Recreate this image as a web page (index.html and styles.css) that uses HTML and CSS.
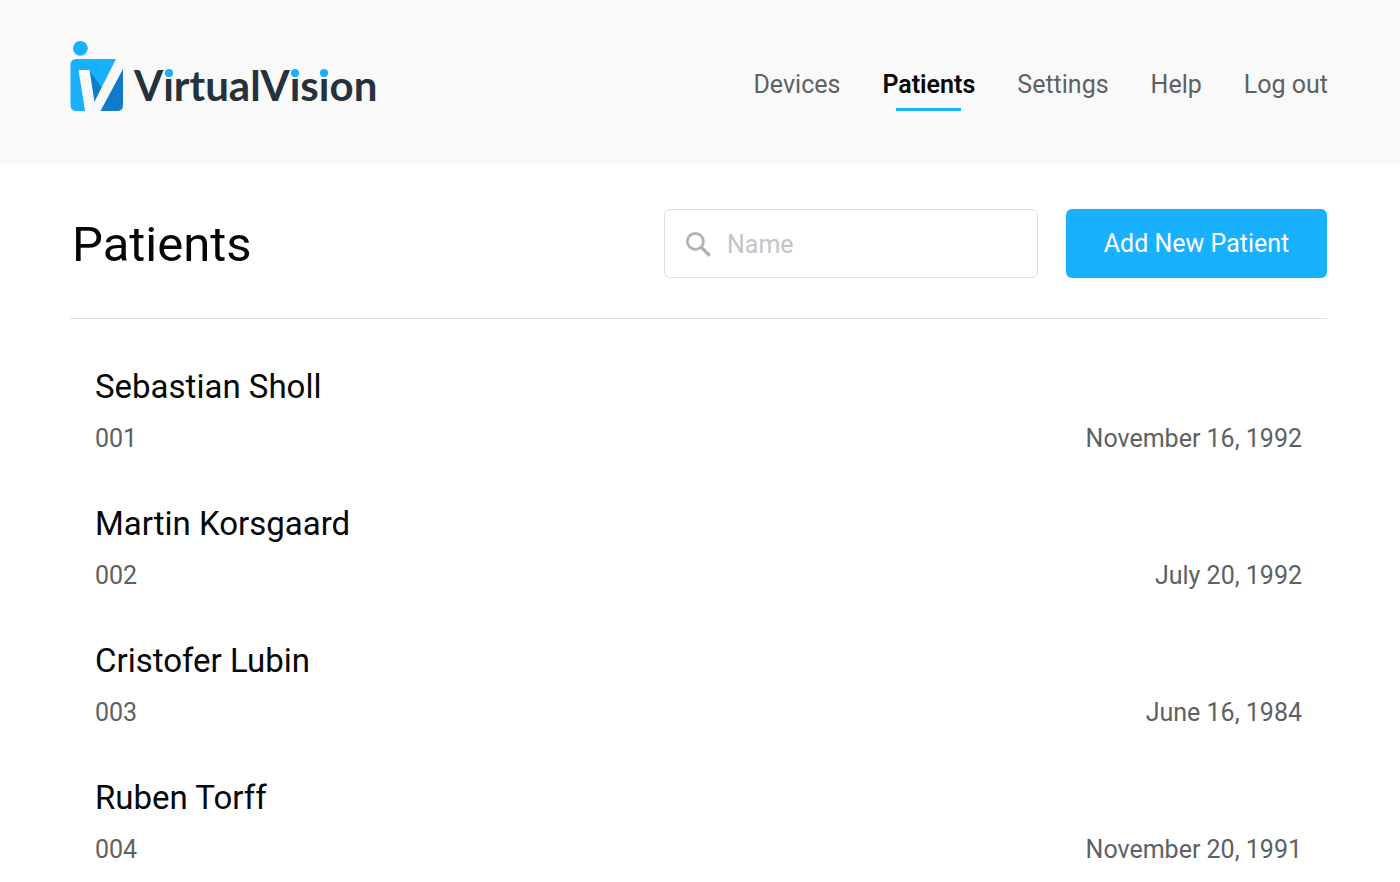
FILE: index.html
```html
<!DOCTYPE html>
<html lang="en">
<head>
<meta charset="utf-8">
<meta name="viewport" content="width=device-width, initial-scale=1">
<title>VirtualVision – Patients</title>
<link rel="stylesheet" href="styles.css">
</head>
<body>
<header class="header">
  <a class="brand" href="#" aria-label="VirtualVision">
    <svg class="brand-mark" viewBox="0 0 54 72" aria-hidden="true">
      <circle cx="10.4" cy="8.300" r="7.4" fill="#18b0ff"/>
      <path d="M6.5 19H46L24.500 61.500 19.500 30H8.500L15 71H6.500Q.5 71 .5 65V25Q.5 19 6.500 19Z" fill="#18b0ff"/>
      <path d="M20 31 31.500 47.500 24.500 61.500ZM53 29V65Q53 71 47 71H30.500Z" fill="#127bc8"/>
    </svg>
    <span class="brand-name">V<span class="dot">i</span>rtualV<span class="dot">i</span>s<span class="dot">i</span>on</span>
  </a>
  <nav class="nav">
    <a href="#">Devices</a>
    <a href="#" class="active" aria-current="page">Patients</a>
    <a href="#">Settings</a>
    <a href="#">Help</a>
    <a href="#">Log out</a>
  </nav>
</header>
<main class="content">
  <div class="toolbar">
    <h1>Patients</h1>
    <label class="search">
      <svg class="search-icon" viewBox="0 0 24 24" aria-hidden="true">
        <circle cx="9" cy="9" r="7.700" fill="none" stroke="#b0b2b3" stroke-width="2.600"/>
        <path d="M14.500 14.500 22.800 22.800" stroke="#b0b2b3" stroke-width="3.200"/>
      </svg>
      <input type="text" placeholder="Name" aria-label="Name">
    </label>
    <button class="add" type="button">Add New Patient</button>
  </div>
  <ul class="patients">
    <li><h2>Sebastian Sholl</h2><div class="meta"><span>001</span><span>November 16, 1992</span></div></li>
    <li><h2>Martin Korsgaard</h2><div class="meta"><span>002</span><span>July 20, 1992</span></div></li>
    <li><h2>Cristofer Lubin</h2><div class="meta"><span>003</span><span>June 16, 1984</span></div></li>
    <li><h2>Ruben Torff</h2><div class="meta"><span>004</span><span>November 20, 1991</span></div></li>
  </ul>
</main>
</body>
</html>
```
FILE: styles.css
```css
* { box-sizing: border-box; }

body {
  margin: 0;
  background: #fff;
  color: #050708;
  font: 25px/32px Roboto, sans-serif;
}

.header {
  display: flex;
  justify-content: space-between;
  align-items: flex-start;
  padding: 40px 72px 52px 70px;
  background: #f9f9f9;
}

.brand {
  display: flex;
  align-items: flex-start;
  gap: 10px;
  color: #25313b;
  text-decoration: none;
}

.brand-mark { width: 54px; height: 72px; }

.brand-name {
  padding-top: 19px;
  font: 700 42px/52px Lato, sans-serif;
}

.dot { position: relative; }

.dot::after {
  content: "";
  position: absolute;
  top: 9px;
  left: 50%;
  width: 8px;
  height: 8px;
  margin-left: -4px;
  border-radius: 50%;
  background: #18b0ff;
}

.nav {
  display: flex;
  gap: 42px;
  padding-top: 29px;
}

.nav a {
  position: relative;
  color: #5d6163;
  text-decoration: none;
}

.nav .active {
  color: #050708;
  font-weight: 600;
}

.nav .active::after {
  content: "";
  position: absolute;
  top: 39px;
  left: 14px;
  right: 14px;
  height: 3px;
  background: #18b0ff;
}

.content { padding: 0 73px 0 70px; }

.toolbar {
  display: flex;
  align-items: center;
  padding: 45px 0 40px;
  border-bottom: 1px solid #dfdfdf;
}

h1 {
  flex: 1;
  margin: 0;
  padding: 2px 0 0 2px;
  font-size: 49px;
  font-weight: 400;
  line-height: 60px;
}

.search {
  display: flex;
  align-items: center;
  gap: 16px;
  width: 374px;
  height: 69px;
  margin-right: 28px;
  padding: 2px 21px 0;
  border: 1px solid #dedede;
  border-radius: 6px;
}

.search-icon {
  flex: none;
  width: 25px;
  height: 25px;
}

.search input {
  flex: 1;
  min-width: 0;
  padding: 0;
  border: 0;
  outline: 0;
  background: none;
  color: #050708;
  font: inherit;
}

.search input::placeholder { color: #c3c5c6; opacity: 1; }

.add {
  min-width: 261px;
  height: 69px;
  padding: 0 36px;
  border: 0;
  border-radius: 6px;
  background: #18b0ff;
  color: #fff;
  font: inherit;
}

.patients {
  margin: 0;
  padding: 46px 25px 0;
  list-style: none;
}

.patients li { padding-bottom: 45px; }

.patients li:last-child { padding-bottom: 16px; }

h2 {
  margin: 0 0 12px;
  font-size: 33px;
  font-weight: 400;
  line-height: 44px;
}

.meta {
  display: flex;
  justify-content: space-between;
  line-height: 36px;
  color: #5d6163;
}
```
